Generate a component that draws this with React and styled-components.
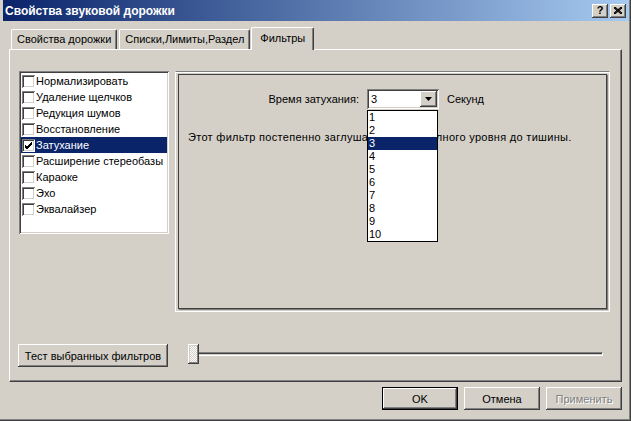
import React from 'react';
import styled, { createGlobalStyle, css } from 'styled-components';

const FACE = '#d4d0c8';
const SHADOW = '#808080';
const DARK = '#404040';
const NAVY = '#0a246a';

const GlobalStyle = createGlobalStyle`
  * { box-sizing: border-box; }
  html, body { margin: 0; padding: 0; background: ${FACE}; }
  body {
    font-family: "Liberation Sans", Arial, sans-serif;
    font-size: 11px;
    color: #000;
  }
`;

const raised = css`
  background: ${FACE};
  box-shadow: inset -1px -1px ${DARK}, inset 1px 1px #fff,
    inset -2px -2px ${SHADOW}, inset 2px 2px ${FACE};
`;

const sunken = css`
  box-shadow: inset 1px 1px ${SHADOW}, inset -1px -1px #fff,
    inset 2px 2px ${DARK}, inset -2px -2px ${FACE};
`;

const Window = styled.div`
  width: 631px;
  height: 421px;
  background: ${FACE};
  display: flex;
  flex-direction: column;
  box-shadow: inset -1px -1px ${DARK}, inset -2px -2px ${SHADOW};
`;

const TitleBar = styled.div`
  height: 21px;
  margin: 0 2px 0 3px;
  display: flex;
  align-items: center;
  padding-left: 2px;
  background: linear-gradient(to right, ${NAVY}, #a6caf0);
  color: #fff;
  font-weight: bold;
  font-size: 12px;
`;

const Title = styled.div`
  flex: 1;
`;

const CaptionButton = styled.div`
  ${raised};
  width: 16px;
  height: 14px;
  margin-right: 2px;
  display: flex;
  align-items: center;
  justify-content: center;
  color: #000;
  font-weight: bold;
  font-size: 11px;
  line-height: 1;
  &:last-child { margin-right: 3px; }
`;

const TabStrip = styled.div`
  height: 22px;
  margin: 6px 0 0 11px;
  display: flex;
  align-items: flex-end;
  position: relative;
  z-index: 2;
`;

const Tab = styled.div`
  height: ${p => (p.$active ? '23px' : '20px')};
  margin: ${p => (p.$active ? '0 -1px -1px -1px' : '0 2px 0 0')};
  padding: ${p => (p.$active ? '4px 8px 0 8px' : '3px 5px 0 5px')};
  background: ${FACE};
  border-top: 1px solid #fff;
  border-left: 1px solid #fff;
  border-right: 1px solid ${DARK};
  border-radius: 2px 2px 0 0;
  box-shadow: inset -1px 0 ${SHADOW};
  white-space: nowrap;
`;

const TabPanel = styled.div`
  width: 613px;
  height: 333px;
  margin-left: 9px;
  border-top: 1px solid #fff;
  border-left: 1px solid #fff;
  border-right: 1px solid ${DARK};
  border-bottom: 1px solid ${DARK};
  box-shadow: inset -1px -1px ${SHADOW};
  padding: 21px 11px 0 9px;
  display: flex;
  flex-direction: column;
`;

const ContentRow = styled.div`
  display: flex;
  gap: 6px;
  height: 241px;
  align-items: flex-start;
`;

const FilterList = styled.div`
  ${sunken};
  width: 150px;
  height: 163px;
  background: #fff;
  padding: 2px;
`;

const Item = styled.div`
  height: 16px;
  display: flex;
  align-items: center;
  padding-left: 1px;
  background: ${p => (p.$selected ? NAVY : 'transparent')};
  color: ${p => (p.$selected ? '#fff' : '#000')};
  white-space: nowrap;
`;

const CheckBox = styled.span`
  ${sunken};
  width: 13px;
  height: 13px;
  flex: none;
  background: #fff;
  margin-right: 1px;
  display: flex;
  align-items: center;
  justify-content: center;
`;

const GroupOuter = styled.div`
  flex: 1;
  height: 241px;
  border-top: 1px solid ${SHADOW};
  border-left: 1px solid #fff;
  border-right: 1px solid #fff;
  border-bottom: 1px solid #fff;
  box-shadow: inset 0 1px #fff;
  padding: 2px;
`;

const GroupInner = styled.div`
  height: 100%;
  border: 1px solid ${DARK};
  box-shadow: 1px 1px ${SHADOW};
  padding-top: 14px;
`;

const SettingRow = styled.div`
  display: flex;
  align-items: center;
  height: 20px;
`;

const FieldLabel = styled.div`
  width: 180px;
  text-align: right;
  margin-right: 8px;
`;

const Combo = styled.div`
  ${sunken};
  position: relative;
  width: 72px;
  height: 20px;
  background: #fff;
  padding: 2px;
  display: flex;
  align-items: center;
`;

const ComboValue = styled.div`
  flex: 1;
  padding-left: 2px;
`;

const ComboButton = styled.div`
  ${raised};
  width: 17px;
  height: 16px;
  display: flex;
  align-items: center;
  justify-content: center;
`;

const DropList = styled.div`
  position: absolute;
  top: 21px;
  left: 0;
  width: 71px;
  background: #fff;
  border: 1px solid #000;
  z-index: 5;
`;

const DropItem = styled.div`
  height: 13px;
  line-height: 13px;
  padding-left: 1px;
  background: ${p => (p.$selected ? NAVY : '#fff')};
  color: ${p => (p.$selected ? '#fff' : '#000')};
`;

const Unit = styled.div`
  margin-left: 8px;
`;

const Description = styled.div`
  margin: 22px 0 0 9px;
  line-height: 13px;
  letter-spacing: 0.3px;
  white-space: nowrap;
`;

const TestRow = styled.div`
  display: flex;
  align-items: flex-start;
  margin: 32px 0 0 -1px;
`;

const Button = styled.div`
  ${raised};
  width: ${p => p.$width || 76}px;
  height: 23px;
  display: flex;
  align-items: center;
  justify-content: center;
  color: ${p => (p.$disabled ? SHADOW : '#000')};
  text-shadow: ${p => (p.$disabled ? '1px 1px #fff' : 'none')};
  ${p => p.$default && css`
    border: 1px solid #000;
    box-shadow: inset -1px -1px ${DARK}, inset 1px 1px #fff,
      inset -2px -2px ${SHADOW};
  `}
`;

const Slider = styled.div`
  position: relative;
  width: 415px;
  height: 20px;
  margin-left: 20px;
`;

const Track = styled.div`
  margin: 8px 0 0 2px;
  height: 4px;
  border-top: 1px solid ${SHADOW};
  border-left: 1px solid ${SHADOW};
  border-bottom: 1px solid #fff;
  border-right: 1px solid #fff;
  box-shadow: inset 1px 1px ${DARK};
`;

const Thumb = styled.div`
  position: absolute;
  left: 0;
  top: 0;
  width: 11px;
  height: 20px;
  background-color: ${FACE};
  background-image: repeating-conic-gradient(#fff 0 25%, ${FACE} 0 50%);
  background-size: 2px 2px;
  box-shadow: inset -1px -1px ${DARK}, inset 1px 1px #fff,
    inset -2px -2px ${SHADOW}, inset 2px 2px ${FACE};
`;

const Footer = styled.div`
  display: flex;
  justify-content: flex-end;
  gap: 6px;
  padding: 5px 9px 0 0;
`;

const filters = [
  'Нормализировать',
  'Удаление щелчков',
  'Редукция шумов',
  'Восстановление',
  'Затухание',
  'Расширение стереобазы',
  'Караоке',
  'Эхо',
  'Эквалайзер',
];

const Check = () => (
  <svg width="9" height="9" viewBox="0 0 9 9">
    <path d="M1 4 L3 6 L8 1 M1 5 L3 7 L8 2 M1 6 L3 8 L8 3" stroke="#000" strokeWidth="1" fill="none" />
  </svg>
);

const Arrow = () => (
  <svg width="7" height="4" viewBox="0 0 7 4">
    <path d="M0 0 H7 L3.5 4 Z" fill="#000" />
  </svg>
);

export default function App() {
  return (
    <>
      <GlobalStyle />
      <Window>
        <TitleBar>
          <Title>Свойства звуковой дорожки</Title>
          <CaptionButton>?</CaptionButton>
          <CaptionButton>
            <svg width="8" height="7" viewBox="0 0 8 7">
              <path d="M0 0 L8 7 M1 0 L8 6 M0 1 L7 7 M8 0 L0 7 M7 0 L0 6 M8 1 L1 7" stroke="#000" strokeWidth="1" />
            </svg>
          </CaptionButton>
        </TitleBar>

        <TabStrip>
          <Tab>Свойства дорожки</Tab>
          <Tab>Списки,Лимиты,Раздел</Tab>
          <Tab $active>Фильтры</Tab>
        </TabStrip>

        <TabPanel>
          <ContentRow>
            <FilterList>
              {filters.map((name, i) => (
                <Item key={name} $selected={i === 4}>
                  <CheckBox>{i === 4 && <Check />}</CheckBox>
                  {name}
                </Item>
              ))}
            </FilterList>

            <GroupOuter>
              <GroupInner>
                <SettingRow>
                  <FieldLabel>Время затухания:</FieldLabel>
                  <Combo>
                    <ComboValue>3</ComboValue>
                    <ComboButton><Arrow /></ComboButton>
                    <DropList>
                      {[1, 2, 3, 4, 5, 6, 7, 8, 9, 10].map(n => (
                        <DropItem key={n} $selected={n === 3}>{n}</DropItem>
                      ))}
                    </DropList>
                  </Combo>
                  <Unit>Секунд</Unit>
                </SettingRow>
                <Description>
                  Этот фильтр постепенно заглушает звук от полного уровня до тишины.
                </Description>
              </GroupInner>
            </GroupOuter>
          </ContentRow>

          <TestRow>
            <Button $width={150}>Тест выбранных фильтров</Button>
            <Slider>
              <Track />
              <Thumb />
            </Slider>
          </TestRow>
        </TabPanel>

        <Footer>
          <Button $default>OK</Button>
          <Button>Отмена</Button>
          <Button $disabled>Применить</Button>
        </Footer>
      </Window>
    </>
  );
}
